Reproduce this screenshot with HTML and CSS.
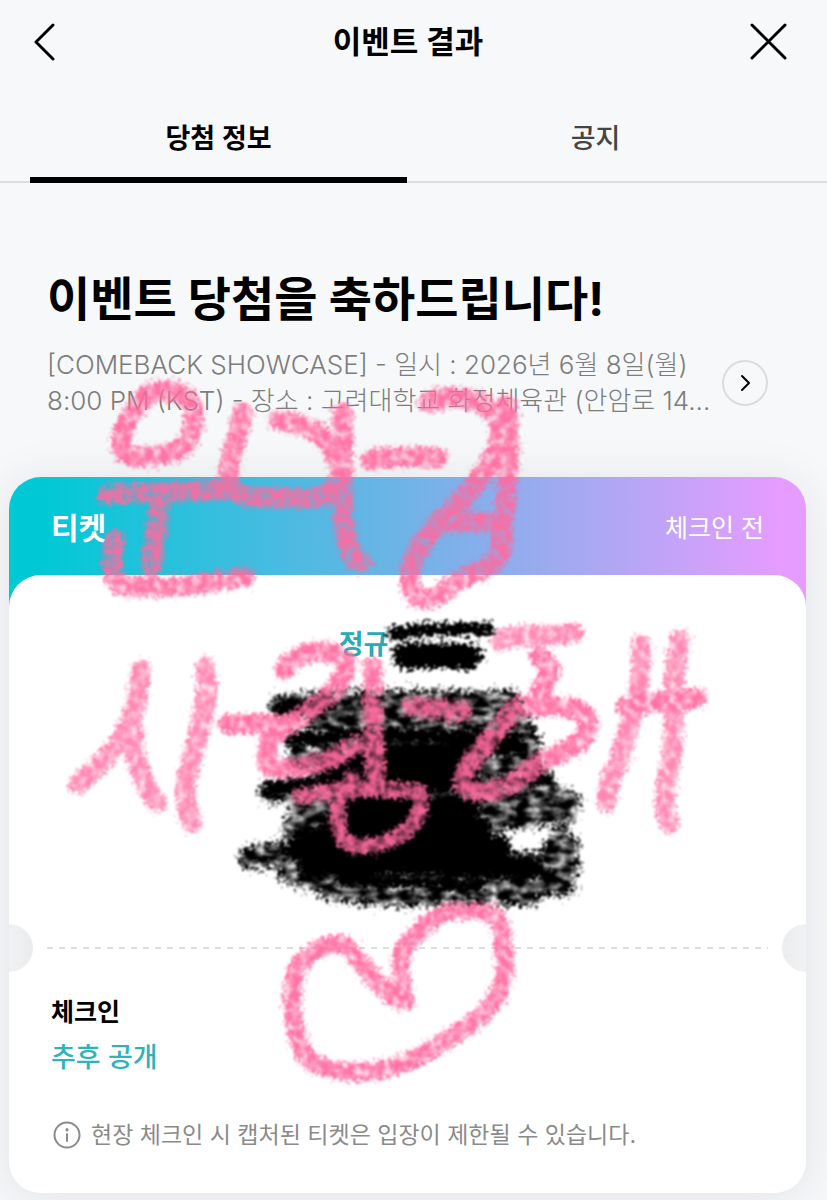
FILE: index.html
```
<!DOCTYPE html>
<html lang="ko">
<head>
  <meta charset="UTF-8">
  <meta name="viewport" content="width=device-width, initial-scale=1.0">
  <title>이벤트 결과</title>
  <link rel="stylesheet" href="styles.css">
</head>
<body>
  <header class="top-bar">
    <button type="button" class="icon-button" aria-label="뒤로">
      <svg width="37" height="38" viewBox="0 0 37 38"><path d="M24 2L7 19L24 36"/></svg>
    </button>
    <h1 class="page-title">이벤트 결과</h1>
    <button type="button" class="icon-button close" aria-label="닫기">
      <svg width="38" height="38" viewBox="0 0 38 38"><path d="M3 2L36 35M36 2L3 35"/></svg>
    </button>
  </header>

  <nav class="tabs">
    <a href="#info" class="tab active">당첨 정보</a>
    <a href="#notice" class="tab">공지</a>
  </nav>

  <main id="info">
    <section class="intro">
      <h2 class="headline">이벤트 당첨을 축하드립니다!</h2>
      <div class="event">
        <p class="event-text">[COMEBACK SHOWCASE] - 일시 : 2026년 6월 8일(월) 8:00 PM (KST) - 장소 : 고려대학교 화정체육관 (안암로 14...</p>
        <button type="button" class="more" aria-label="자세히">
          <svg width="12" height="18" viewBox="0 0 12 18"><path d="M3 2L10 9L3 16"/></svg>
        </button>
      </div>
    </section>

    <section class="ticket">
      <div class="ticket-head">
        <strong>티켓</strong>
        <span>체크인 전</span>
      </div>
      <div class="ticket-body">
        <div class="ticket-main">
          <p class="album">정규<span class="covered"></span></p>
        </div>
        <div class="divider">
          <svg width="100%" height="2"><line x1="0" y1="1" x2="100%" y2="1"/></svg>
        </div>
        <div class="ticket-info">
          <h3>체크인</h3>
          <p class="status">추후 공개</p>
          <p class="hint">
            <svg width="28" height="28" viewBox="0 0 28 28"><circle cx="14" cy="14" r="12.5"/><path d="M14 13V20"/><path class="dot" d="M14 8.5V9"/></svg>
            현장 체크인 시 캡처된 티켓은 입장이 제한될 수 있습니다.
          </p>
        </div>
      </div>
    </section>
  </main>

  <!-- crayon doodles over the ticket -->
  <svg class="doodle" viewBox="0 0 827 1200" aria-hidden="true">
    <defs>
      <filter id="crayon" filterUnits="userSpaceOnUse" x="0" y="350" width="827" height="800" color-interpolation-filters="sRGB">
        <feTurbulence type="fractalNoise" baseFrequency="0.33" numOctaves="3" seed="4" result="edge"/>
        <feTurbulence type="fractalNoise" baseFrequency="0.13" numOctaves="5" seed="21" result="noise"/>
        <feDisplacementMap in="SourceGraphic" in2="edge" scale="18" xChannelSelector="R" yChannelSelector="G" result="rough"/>
        <feColorMatrix in="noise" type="matrix" values="0 0 0 0 0  0 0 0 0 0  0 0 0 0 0  1.2 0 1.2 0 -0.38" result="grain"/>
        <feComposite in="rough" in2="grain" operator="in" result="speckled"/>
        <feGaussianBlur in="speckled" stdDeviation="0.8"/>
      </filter>
      <filter id="charcoal" filterUnits="userSpaceOnUse" x="0" y="350" width="827" height="800" color-interpolation-filters="sRGB">
        <feTurbulence type="fractalNoise" baseFrequency="0.31" numOctaves="3" seed="9" result="edge"/>
        <feTurbulence type="fractalNoise" baseFrequency="0.07 0.13" numOctaves="5" seed="33" result="noise"/>
        <feDisplacementMap in="SourceGraphic" in2="edge" scale="26" xChannelSelector="R" yChannelSelector="G" result="rough"/>
        <feColorMatrix in="noise" type="matrix" values="0 0 0 0 0  0 0 0 0 0  0 0 0 0 0  1.5 0 1.5 0 -0.72" result="grain"/>
        <feComposite in="rough" in2="grain" operator="in" result="speckled"/>
        <feGaussianBlur in="speckled" stdDeviation="0.9"/>
      </filter>
      <filter id="solid" filterUnits="userSpaceOnUse" x="0" y="350" width="827" height="800" color-interpolation-filters="sRGB">
        <feTurbulence type="fractalNoise" baseFrequency="0.27" numOctaves="3" seed="2" result="noise"/>
        <feDisplacementMap in="SourceGraphic" in2="noise" scale="20" xChannelSelector="R" yChannelSelector="G" result="rough"/>
        <feGaussianBlur in="rough" stdDeviation="0.9"/>
      </filter>
    </defs>

    <g class="black" filter="url(#charcoal)">
      <path stroke-width="24" d="M282 706L330 702L510 702M320 722L520 722M300 742L526 735M300 758L530 758M272 792L340 782L540 782M300 806L570 802M294 828L490 826M560 842L568 846M250 858L290 852L568 866M290 872L330 884L562 884M330 888L370 894L530 894M540 780L565 812"/>
      <path stroke-width="18" d="M250 856L280 856L300 880M560 834L545 860L566 886M530 740L535 770M480 822L525 820L560 812"/>
    </g>
    <g class="black" filter="url(#solid)">
      <path stroke-width="13" d="M393 634L412 630L489 629"/>
      <path stroke-width="26" d="M405 656L469 656"/>
      <path stroke-width="13" d="M278 707L330 704M292 740L350 735L515 738M360 752L520 748M268 790L340 780M300 834L380 838"/>
      <path stroke-width="24" d="M330 766L460 764M345 784L470 780M350 806L470 808M330 826L480 830M295 850L360 838L500 848M310 866L400 862L530 868"/>
      <path stroke-width="10" d="M340 880L400 882L480 884M500 866L545 874M500 782L545 778"/>
    </g>

    <g class="pink" filter="url(#crayon)">
      <path d="M140 403C126 420 118 435 122 450C128 460 160 458 178 450C198 438 198 405 185 396C165 384 142 392 140 405"/>
      <path d="M107 494L225 490M160 495C157 525 155 545 151 567M114 540C113 560 110 580 120 585C160 591 205 584 245 577"/>
      <path d="M243 413C236 440 227 465 229 482C235 503 275 497 310 498C342 498 343 470 343 440M278 420C310 424 330 436 338 462M342 413C346 460 338 500 346 535C350 552 354 560 362 562"/>
      <path d="M371 460C390 455 420 457 438 458"/>
      <path d="M428 402C465 390 498 405 500 430C500 462 470 490 448 514C425 535 405 565 411 587C418 609 439 597 455 583C476 570 502 568 502 543C506 512 472 524 438 522M507 405C512 450 507 495 500 545"/>
      <path class="faint" d="M141 670C139 690 137 705 131 720C120 745 98 768 78 784M133 725C133 760 143 785 157 802M205 667C211 700 198 735 190 765C181 790 186 805 192 823"/>
      <path d="M228 724L285 724M285 670C290 648 345 645 346 664C346 690 310 710 270 738C265 755 262 770 282 769C310 768 335 760 354 745M373 667C371 700 374 740 376 780"/>
      <path stroke-width="16" d="M300 797C340 785 385 790 415 791C430 795 417 825 402 834C378 850 347 850 341 835C336 822 337 805 337 796M352 778L352 792"/>
      <path d="M412 706L462 712"/>
      <path class="faint" d="M500 641C520 632 550 638 574 633M680 640C670 680 676 710 672 750C668 780 660 800 669 823M641 645C643 685 633 715 623 748C615 775 605 785 607 802"/>
      <path d="M539 656L551 669L536 704M520 706C550 708 585 702 588 722C590 751 540 756 530 770C515 788 475 800 464 786C455 770 495 740 514 708M626 707C650 700 675 705 697 698"/>
      <path stroke-width="18" d="M403 1001C380 994 361 959 346 946C330 939 314 950 299 964C288 990 291 1030 305 1056C322 1074 358 1073 382 1070C423 1060 453 1036 480 1017C504 995 508 975 503 946C502 905 485 912 463 911C435 910 423 928 403 948C398 970 403 990 405 1001"/>
    </g>
  </svg>
</body>
</html>
```

FILE: styles.css
```
* {
    box-sizing: border-box;
}

body {
    position: relative;
    margin: 0;
    min-height: 100vh;
    overflow-x: hidden;
    background-color: #f7f8fa;
    color: #000;
    font-family: Inter, "Noto Sans CJK KR", sans-serif;
}

h1, h2, h3, p {
    margin: 0;
}

button {
    padding: 0;
    border: none;
    background: none;
    cursor: pointer;
}

svg {
    display: block;
    fill: none;
    stroke: #000;
    stroke-width: 3;
    stroke-linecap: round;
    stroke-linejoin: round;
}

.top-bar {
    display: grid;
    grid-template-columns: 1fr auto 1fr;
    align-items: center;
    height: 83px;
    padding: 0 40px 0 29px;
}

.icon-button {
    justify-self: start;
}

.icon-button.close {
    justify-self: end;
}

.page-title {
    font-size: 31px;
    font-weight: 600;
    line-height: 40px;
}

.tabs {
    display: flex;
    height: 100px;
    padding: 0 43px 0 30px;
    box-shadow: inset 0 -2px #dcdde0;
}

.tab {
    flex: 1;
    padding-top: 36px;
    border-bottom: 6px solid transparent;
    color: #444;
    font-size: 27px;
    font-weight: 500;
    line-height: 40px;
    text-align: center;
    text-decoration: none;
}

.tab.active {
    border-color: #000;
    color: #000;
    font-weight: 600;
}

.intro {
    padding: 84px 59px 58px 47px;
}

.headline {
    font-size: 47px;
    font-weight: 700;
    line-height: 64px;
}

.event {
    display: flex;
    align-items: center;
    justify-content: space-between;
    margin-top: 16px;
}

.event-text {
    color: #7c7c7c;
    font-size: 26px;
    font-weight: 300;
    line-height: 36px;
}

.more {
    display: flex;
    flex: none;
    align-items: center;
    justify-content: center;
    width: 46px;
    height: 46px;
    border: 2px solid #dcdcdc;
    border-radius: 50%;
}

.more svg {
    stroke-width: 2;
}

.ticket {
    margin: 0 21px 7px 9px;
    border-radius: 32px;
    background: linear-gradient(90deg, #00c9d6 4%, #6bb4e6 48%, #e69cff 97%) top / 100% 140px no-repeat;
    box-shadow: 0 4px 48px rgba(30, 35, 45, 0.1);
}

.ticket-head {
    display: flex;
    align-items: center;
    justify-content: space-between;
    height: 98px;
    padding: 0 42px;
    color: #fff;
    font-size: 25px;
}

.ticket-head strong {
    font-size: 30px;
    font-weight: 600;
}

.ticket-body {
    border-radius: 32px;
    background-color: #fff;
}

.ticket-main {
    height: 349px;
    padding-top: 50px;
}

.album {
    display: flex;
    justify-content: center;
    color: #2aabb3;
    font-size: 27px;
    font-weight: 600;
    line-height: 40px;
}

.covered {
    width: 88px;
}

.divider {
    display: flex;
    align-items: center;
    justify-content: space-between;
    gap: 14px;
}

.divider svg {
    flex: 1;
    min-width: 0;
    stroke: #dedede;
    stroke-width: 2;
    stroke-linecap: butt;
    stroke-dasharray: 6 6;
}

/* the two punched notches */
.divider::before,
.divider::after {
    content: "";
    width: 24px;
    height: 48px;
    border-radius: 0 24px 24px 0;
    background: linear-gradient(90deg, #f1f2f4, #e9ebed);
}

.divider::after {
    border-radius: 24px 0 0 24px;
    background: linear-gradient(90deg, #ebedef, #eff1f3);
}

.ticket-info {
    padding: 22px 42px 40px;
}

.ticket-info h3 {
    font-size: 25px;
    font-weight: 600;
    line-height: 36px;
}

.status {
    margin-top: 8px;
    color: #2fb2b9;
    font-size: 27px;
    font-weight: 500;
    line-height: 40px;
}

.hint {
    display: flex;
    align-items: center;
    gap: 10px;
    margin-top: 39px;
    padding-left: 2px;
    color: #8a8a8a;
    font-size: 23px;
    line-height: 36px;
}

.hint svg {
    flex: none;
    stroke: #8a8a8a;
    stroke-width: 2;
}

.hint .dot {
    stroke-width: 3;
}

.doodle {
    position: absolute;
    top: 0;
    left: 0;
    width: 100%;
    pointer-events: none;
}

.doodle .black {
    stroke: #000;
}

.doodle .pink {
    stroke: #ff6a9f;
    stroke-width: 20;
    opacity: 0.94;
}

.doodle .faint {
    opacity: 0.85;
}
```
